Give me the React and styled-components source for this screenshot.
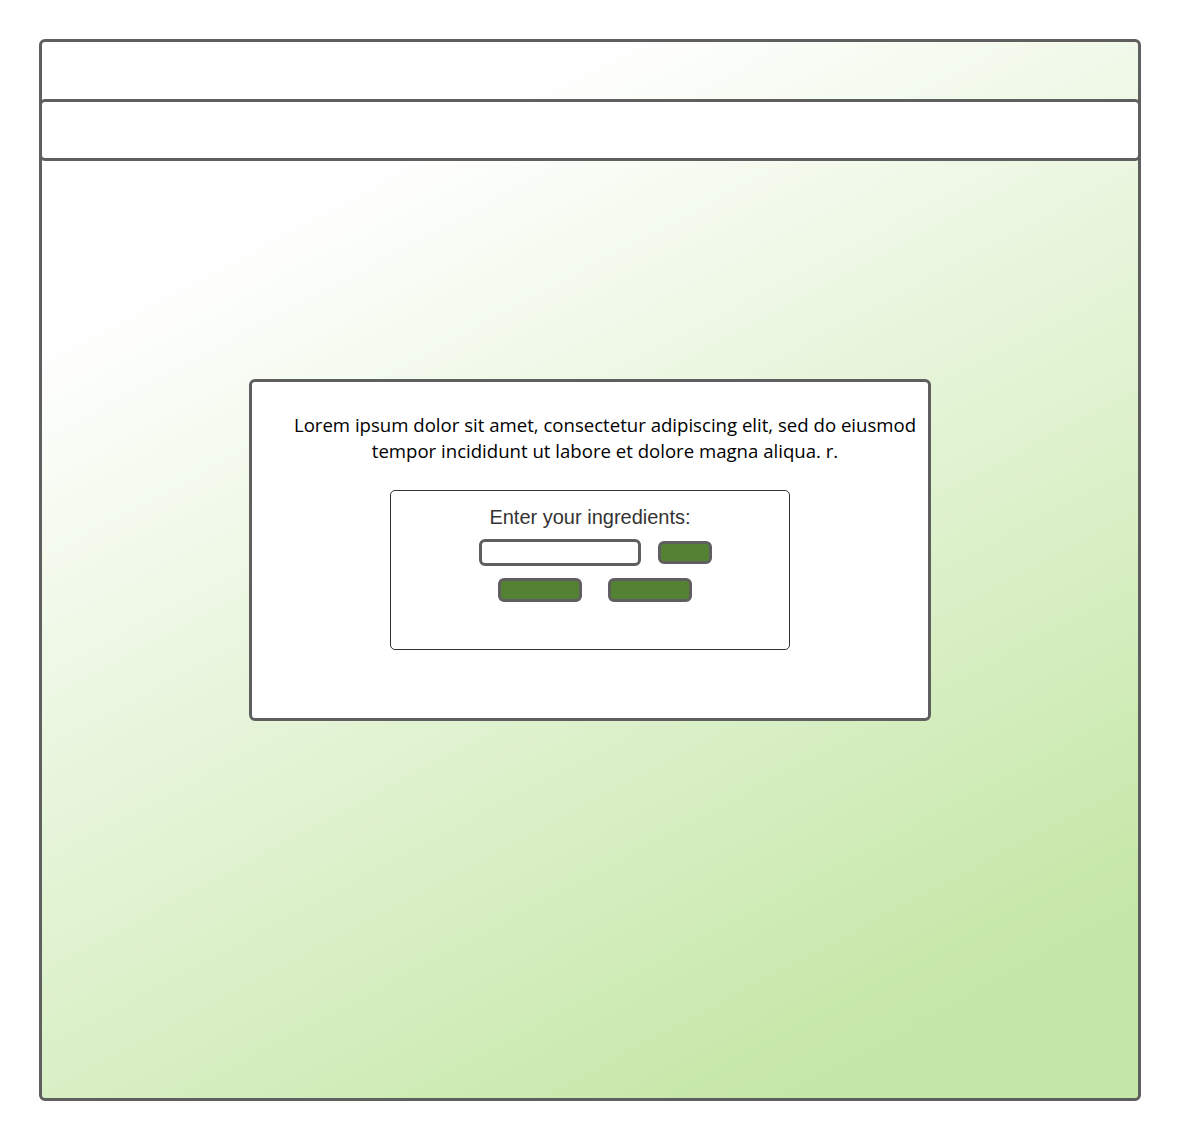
import styled, { createGlobalStyle } from "styled-components";

const GlobalStyle = createGlobalStyle`
  html, body {
    margin: 0;
    padding: 0;
    background: #ffffff;
  }
  * {
    box-sizing: border-box;
  }
`;

const Page = styled.div`
  width: 1180px;
  height: 1140px;
  padding: 39px;
`;

const Frame = styled.div`
  height: 1062px;
  display: flex;
  flex-direction: column;
  border: 3px solid #5f5f5f;
  border-radius: 6px;
  background: linear-gradient(152deg, #ffffff 18%, #c5e7a7 88%);
`;

const Header = styled.div`
  height: 57px;
`;

const NavBar = styled.div`
  height: 62px;
  margin: 0 -3px;
  background: #ffffff;
  border: 3px solid #5f5f5f;
  border-radius: 6px;
`;

const Main = styled.main`
  flex: 1;
  display: flex;
  justify-content: center;
  align-items: flex-start;
  padding-top: 218px;
`;

const Card = styled.section`
  width: 682px;
  height: 342px;
  background: #ffffff;
  border: 3px solid #5f5f5f;
  border-radius: 6px;
  padding-top: 30px;
  display: flex;
  flex-direction: column;
  align-items: center;
`;

const Intro = styled.p`
  margin: 0 0 26px;
  padding-left: 30px;
  font-family: "Open Sans", sans-serif;
  font-size: 18.6px;
  line-height: 26px;
  color: #000000;
  text-align: center;
  white-space: nowrap;
`;

const Panel = styled.div`
  width: 400px;
  height: 160px;
  border: 1px solid #333333;
  border-radius: 5px;
  padding-top: 15px;
  display: flex;
  flex-direction: column;
  align-items: center;
`;

const Label = styled.label`
  font-family: "Liberation Sans", Arial, sans-serif;
  font-size: 20px;
  line-height: 22px;
  color: #333333;
`;

const Row = styled.div`
  display: flex;
  align-items: center;
  gap: ${({ $gap }) => $gap}px;
  margin-top: ${({ $top }) => $top}px;
  padding-left: 10px;
`;

const Field = styled.input`
  width: 162px;
  height: 27px;
  background: #ffffff;
  border: 3px solid #5f5f5f;
  border-radius: 6px;
  outline: none;
`;

const GreenButton = styled.button`
  width: ${({ $w }) => $w}px;
  height: ${({ $h }) => $h}px;
  padding: 0;
  background: #548235;
  border: 3px solid #5f5f5f;
  border-radius: 6px;
  cursor: pointer;
`;

export default function App() {
  return (
    <>
      <GlobalStyle />
      <Page>
        <Frame>
          <Header />
          <NavBar />
          <Main>
            <Card>
              <Intro>
                Lorem ipsum dolor sit amet, consectetur adipiscing elit, sed do eiusmod
                <br />
                tempor incididunt ut labore et dolore magna aliqua. r.
              </Intro>
              <Panel>
                <Label>Enter your ingredients:</Label>
                <Row $gap={17} $top={11}>
                  <Field type="text" aria-label="ingredients" />
                  <GreenButton $w={54} $h={23} aria-label="add" />
                </Row>
                <Row $gap={26} $top={12}>
                  <GreenButton $w={84} $h={24} aria-label="option one" />
                  <GreenButton $w={84} $h={24} aria-label="option two" />
                </Row>
              </Panel>
            </Card>
          </Main>
        </Frame>
      </Page>
    </>
  );
}
